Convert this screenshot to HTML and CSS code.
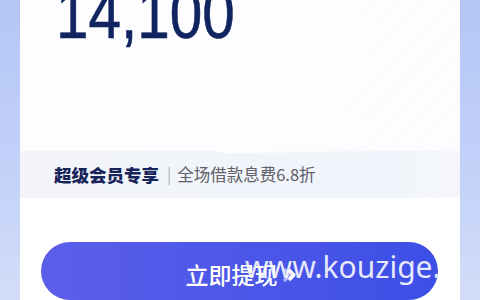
FILE: index.html
```html
<!DOCTYPE html>
<html lang="zh">
<head>
<meta charset="utf-8">
<link rel="stylesheet" href="styles.css">
</head>
<body>
<div class="card">
  <div class="top">
    <div class="amount">14,100</div>
  </div>
  <div class="band">
    <span class="vip">超级会员专享</span><span class="sep">|</span><span class="perk">全场借款息费6.8折</span>
  </div>
  <div class="action">
    <div class="btn">
      <span class="btn-label">立即提现</span>
      <svg class="chev" width="16" height="16" viewBox="0 0 16 16">
        <path d="M2 2 L8 8 L2 14" fill="none" stroke="#ffffff" stroke-opacity="0.55" stroke-width="3.2" stroke-linejoin="round"/>
        <path d="M7 3 L12 8 L7 13" fill="none" stroke="#ffffff" stroke-width="3.2" stroke-linejoin="round"/>
      </svg>
      <span class="wm">www.kouzige.com</span>
    </div>
  </div>
</div>
</body>
</html>
```
FILE: styles.css
```css
html, body {
  margin: 0;
  padding: 0;
}
body {
  width: 480px;
  height: 300px;
  overflow: hidden;
  background: linear-gradient(180deg, #b4c6f6 0%, #c3d2f8 60%, #d3ddf9 100%);
  font-family: "Noto Sans CJK SC", "Noto Sans", sans-serif;
}
.card {
  margin: 0 20px;
  height: 300px;
  background: #fdfdff;
  display: flex;
  flex-direction: column;
}
.top {
  height: 153px;
  background:
    repeating-linear-gradient(135deg, rgba(220,226,240,0) 0px, rgba(220,226,240,0) 6px, rgba(214,221,238,0.12) 7px, rgba(220,226,240,0) 8px),
    #fdfdff;
  background-size: 240px 153px;
  background-position: right top;
  background-repeat: no-repeat;
  position: relative;
}
.top::before {
  content: "";
  position: absolute;
  right: 0;
  top: 0;
  width: 240px;
  height: 153px;
  background: linear-gradient(90deg, #fdfdff 0%, rgba(253,253,255,0) 70%);
}
.amount {
  font-family: "Liberation Sans", sans-serif;
  font-size: 70px;
  line-height: 1;
  color: #102460;
  margin: -21px 0 0 36px;
  -webkit-text-stroke: 0.6px #102460;
  position: relative;
  transform: scaleX(0.835);
  transform-origin: left top;
}
.band {
  height: 48px;
  background: linear-gradient(90deg, #f3f5fa 0%, #f1f4fb 70%, #f4f6fc 100%);
  display: flex;
  align-items: center;
  padding-left: 34px;
}
.vip {
  font-weight: 900;
  color: #16245a;
  font-size: 17.5px;
}
.sep {
  color: #9a9ca6;
  margin: 0 6px 0 8px;
  font-weight: 300;
  font-size: 16.5px;
}
.perk {
  color: #5f6068;
  font-size: 16.5px;
}
.action {
  padding: 44px 22px 0 21px;
  background: #ffffff;
  flex: 1;
}
.btn {
  height: 58px;
  border-radius: 29px;
  background: linear-gradient(90deg, #5c5ee9 0%, #4c57e8 50%, #3c4fe6 100%);
  display: flex;
  align-items: center;
  justify-content: center;
  position: relative;
  overflow: hidden;
}
.btn-label {
  color: #ffffff;
  font-size: 23px;
  font-weight: 500;
  margin-left: 4px;
  margin-top: 6px;
}
.chev {
  margin-left: 4px;
  margin-top: 8px;
}
.wm {
  position: absolute;
  left: 204px;
  top: 4px;
  color: rgba(255,255,255,0.88);
  font-family: "Noto Sans", sans-serif;
  font-size: 30px;
  white-space: nowrap;
}
```
